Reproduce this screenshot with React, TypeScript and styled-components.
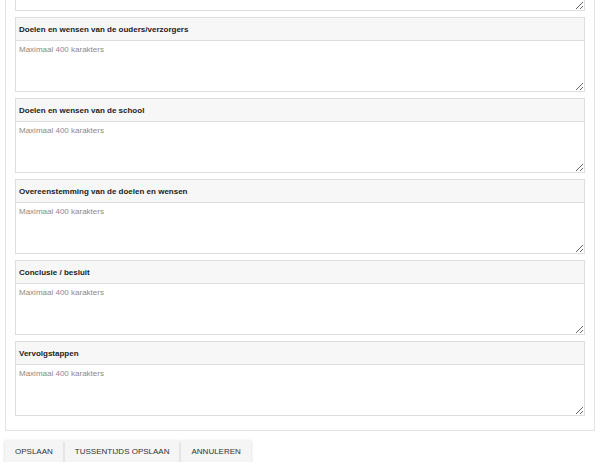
import React from "react";
import styled, { createGlobalStyle } from "styled-components";

const Global = createGlobalStyle`
  html, body { margin: 0; padding: 0; background: #ffffff; }
  body { font-family: "Liberation Sans", Arial, sans-serif; color: #333; }
  * { box-sizing: border-box; }
`;

const Page = styled.div`
  margin-top: -73px;
  padding: 0 9px 0 5px;
`;

const Panel = styled.div`
  border: 1px solid #e2e2e2;
  background: #fff;
  padding: 8px 9px 14px 9px;
  display: flex;
  flex-direction: column;
  gap: 6px;
`;

const Card = styled.div`
  display: flex;
  flex-direction: column;
`;

const CardHeader = styled.div`
  height: 23px;
  border: 1px solid #dedede;
  border-bottom: none;
  background: #f7f7f7;
  display: flex;
  align-items: center;
  padding: 0 3px;
  font-size: 8px;
  font-weight: 700;
  color: #222;
`;

const Area = styled.textarea`
  display: block;
  width: 100%;
  height: 52px;
  border: 1px solid #dedede;
  padding: 3px 3px;
  font-family: "Liberation Sans", Arial, sans-serif;
  font-size: 8px;
  line-height: 11px;
  color: #333;
  resize: vertical;
  outline: none;
  margin: 0;
  &::placeholder { color: #8a8a8a; }
`;

const Actions = styled.div`
  display: flex;
  gap: 2px;
  padding: 9px 0 0 0;
`;

const Button = styled.button`
  height: 22px;
  padding: 0 10px;
  border: none;
  background: #f5f5f5;
  box-shadow: 0 1px 3px rgba(0,0,0,0.22);
  font-family: "Liberation Sans", Arial, sans-serif;
  font-size: 8px;
  color: #333;
  text-transform: uppercase;
  border-radius: 1px;
  cursor: pointer;
`;

const fields = [
  "Ervaringen",
  "Doelen en wensen van de ouders/verzorgers",
  "Doelen en wensen van de school",
  "Overeenstemming van de doelen en wensen",
  "Conclusie / besluit",
  "Vervolgstappen",
];

export default function App() {
  return (
    <>
      <Global />
      <Page>
        <Panel>
          {fields.map((f) => (
            <Card key={f}>
              <CardHeader>{f}</CardHeader>
              <Area placeholder="Maximaal 400 karakters" />
            </Card>
          ))}
        </Panel>
        <Actions>
          <Button>Opslaan</Button>
          <Button>Tussentijds opslaan</Button>
          <Button>Annuleren</Button>
        </Actions>
      </Page>
    </>
  );
}
